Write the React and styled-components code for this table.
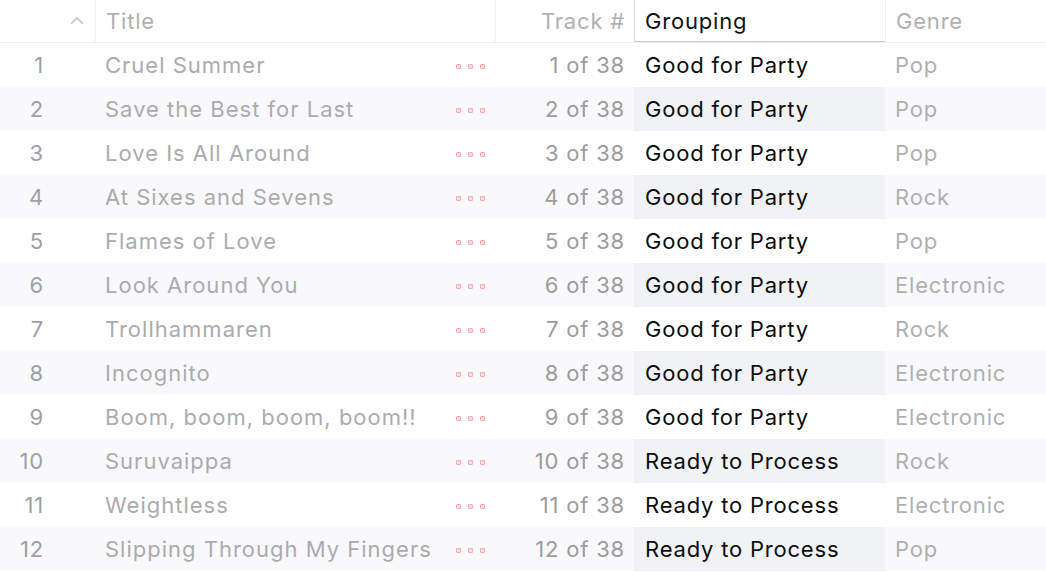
import React from 'react';
import styled, { createGlobalStyle } from 'styled-components';

const GlobalStyle = createGlobalStyle`
  html, body {
    margin: 0;
    padding: 0;
    background: #ffffff;
  }
  body {
    font-family: Inter, "Liberation Sans", sans-serif;
    -webkit-font-smoothing: antialiased;
  }
`;

const COLUMNS = '95px 400px 139px 251px 1fr';

const Table = styled.div`
  width: 1046px;
  height: 574px;
  overflow: hidden;
  background: #ffffff;
`;

const HeaderRow = styled.div`
  display: grid;
  grid-template-columns: ${COLUMNS};
  height: 43px;
  border-bottom: 1px solid #ececee;
  box-sizing: border-box;
`;

const HeaderCell = styled.div`
  display: flex;
  align-items: center;
  justify-content: ${props => props.$align === 'right' ? 'flex-end' : 'flex-start'};
  padding: ${props => props.$pad || '0 10px'};
  font-size: 22px;
  letter-spacing: 0.8px;
  color: ${props => props.$active ? '#111111' : '#b0b0b3'};
  border-left: 1px solid ${props => props.$active ? '#d8d8da' : props.$first ? 'transparent' : '#f0f0f2'};
  box-shadow: ${props => props.$active ? 'inset 0 -1px 0 #c9c9cc' : 'none'};
  box-sizing: border-box;
  height: 42px;
  padding-bottom: 1px;
`;

const Caret = styled.svg`
  width: 14px;
  height: 9px;
  margin-right: 11px;
  stroke: #c4c4c6;
  fill: none;
  stroke-width: 1.6;
`;

const Row = styled.div`
  display: grid;
  grid-template-columns: ${COLUMNS};
  height: 44px;
  background: ${props => props.$striped ? '#f9f9fc' : '#ffffff'};
  font-size: 22px;
  letter-spacing: 0.8px;
`;

const Cell = styled.div`
  display: flex;
  align-items: center;
  justify-content: ${props => props.$align === 'right' ? 'flex-end' : 'flex-start'};
  padding: ${props => props.$pad || '0 10px'};
  color: ${props => props.$color || '#ababae'};
  white-space: nowrap;
  overflow: hidden;
`;

const GroupCell = styled(Cell)`
  color: #0d0d0d;
  background: ${props => props.$striped ? '#f1f2f6' : 'transparent'};
`;

const TitleText = styled.span`
  flex: 1;
  overflow: hidden;
  letter-spacing: 1px;
`;

const Dots = styled.div`
  display: flex;
  gap: 7px;
  margin-top: 2px;
`;

const Dot = styled.span`
  width: 5px;
  height: 5px;
  border: 1px solid #f7aab3;
  background: #fcdadd;
  border-radius: 1px;
  box-sizing: border-box;
`;

const tracks = [
  ['Cruel Summer', 'Good for Party', 'Pop'],
  ['Save the Best for Last', 'Good for Party', 'Pop'],
  ['Love Is All Around', 'Good for Party', 'Pop'],
  ['At Sixes and Sevens', 'Good for Party', 'Rock'],
  ['Flames of Love', 'Good for Party', 'Pop'],
  ['Look Around You', 'Good for Party', 'Electronic'],
  ['Trollhammaren', 'Good for Party', 'Rock'],
  ['Incognito', 'Good for Party', 'Electronic'],
  ['Boom, boom, boom, boom!!', 'Good for Party', 'Electronic'],
  ['Suruvaippa', 'Ready to Process', 'Rock'],
  ['Weightless', 'Ready to Process', 'Electronic'],
  ['Slipping Through My Fingers', 'Ready to Process', 'Pop'],
];

const App = () => {
  return (
    <>
      <GlobalStyle />
      <Table>
        <HeaderRow>
          <HeaderCell $first $align="right" $pad="0">
            <Caret viewBox="0 0 14 9">
              <path d="M1 8 L7 2 L13 8" />
            </Caret>
          </HeaderCell>
          <HeaderCell>Title</HeaderCell>
          <HeaderCell $align="right" $pad="0 9px 0 0">Track #</HeaderCell>
          <HeaderCell $active $pad="0 10px">Grouping</HeaderCell>
          <HeaderCell>Genre</HeaderCell>
        </HeaderRow>
        {tracks.map(([title, group, genre], i) => {
          const striped = i % 2 === 1;
          return (
            <Row key={title} $striped={striped}>
              <Cell $align="right" $pad="0 51px 0 0" $color="#a0a0a3">{i + 1}</Cell>
              <Cell $pad="0 10px 0 10px">
                <TitleText>{title}</TitleText>
                <Dots>
                  <Dot />
                  <Dot />
                  <Dot />
                </Dots>
              </Cell>
              <Cell $align="right" $pad="0 9px 0 0" $color="#9c9c9f">{i + 1} of 38</Cell>
              <GroupCell $striped={striped} $pad="0 11px">{group}</GroupCell>
              <Cell $pad="0 10px" $color="#afafb2">{genre}</Cell>
            </Row>
          );
        })}
      </Table>
    </>
  );
};

export default App;
